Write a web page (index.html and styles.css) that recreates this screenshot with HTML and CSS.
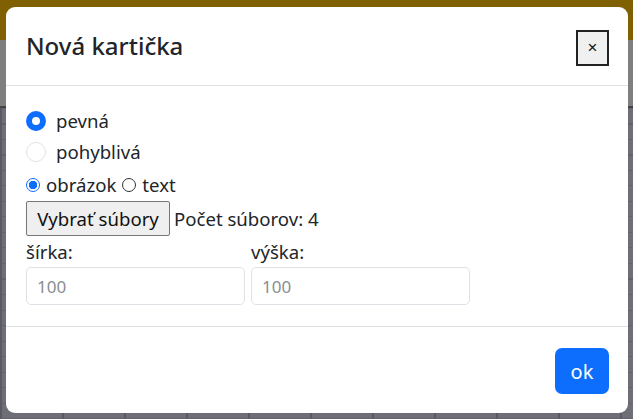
FILE: index.html
```html
<!DOCTYPE html>
<html lang="sk">
<head>
<meta charset="utf-8">
<title>Nová kartička</title>
<link rel="stylesheet" href="styles.css">
</head>
<body>
<div class="page">
  <div class="topbar"></div>
  <div class="sheet"></div>
  <div class="grid"></div>
</div>
<div class="backdrop"></div>
<div class="modal">
  <div class="modal-header">
    <h5 class="modal-title">Nová kartička</h5>
    <button class="close-btn" type="button">×</button>
  </div>
  <div class="modal-body">
    <label class="check check-1">
      <span class="bs-radio checked"></span>
      <span class="check-label">pevná</span>
    </label>
    <label class="check check-2">
      <span class="bs-radio"></span>
      <span class="check-label">pohyblivá</span>
    </label>
    <div class="native-row">
      <span class="nat-radio checked"></span>
      <span class="nat-label">obrázok</span>
      <span class="nat-radio"></span>
      <span class="nat-label">text</span>
    </div>
    <div class="file-row">
      <button class="file-btn" type="button">Vybrať súbory</button>
      <span class="file-count">Počet súborov: 4</span>
    </div>
    <div class="size-row">
      <div class="field">
        <label class="field-label">šírka:</label>
        <input class="field-input" type="text" placeholder="100">
      </div>
      <div class="field">
        <label class="field-label">výška:</label>
        <input class="field-input" type="text" placeholder="100">
      </div>
    </div>
  </div>
  <div class="modal-footer">
    <button class="ok-btn" type="button">ok</button>
  </div>
</div>
</body>
</html>
```

FILE: styles.css
```css
html, body {
  margin: 0;
  padding: 0;
  width: 633px;
  height: 419px;
  overflow: hidden;
}

body {
  font-family: "Noto Sans", "Open Sans", sans-serif;
  color: #212529;
  position: relative;
}

.page {
  display: flex;
  flex-direction: column;
  height: 419px;
}

.topbar {
  height: 40px;
  background: #ffc107;
}

.sheet {
  height: 66px;
  background: #ffffff;
  border-bottom: 2px solid #888;
}

.grid {
  flex: 1;
  background-color: #dcdcee;
  background-image:
    repeating-linear-gradient(90deg, #b4b4c4 0 2px, transparent 2px 62px),
    repeating-linear-gradient(0deg, #c4c4d4 0 1px, transparent 1px 15.5px);
}

.backdrop {
  position: fixed;
  inset: 0;
  background: rgba(0, 0, 0, 0.5);
}

.modal {
  position: fixed;
  left: 6px;
  top: 7px;
  width: 622px;
  height: 406px;
  background: #fff;
  border-radius: 9px;
  display: flex;
  flex-direction: column;
  box-sizing: border-box;
}

.modal-header {
  height: 79px;
  box-sizing: border-box;
  border-bottom: 1px solid #dee2e6;
  display: flex;
  align-items: center;
  justify-content: space-between;
  padding: 0 19px 0 20px;
}

.modal-title {
  margin: 0;
  font-size: 24px;
  font-weight: 500;
  line-height: 1.2;
}

.close-btn {
  width: 33px;
  height: 36px;
  box-sizing: border-box;
  border: 2px solid #222;
  background: #f0f0f0;
  font-family: "Liberation Sans", sans-serif;
  font-size: 17px;
  color: #111;
  padding: 0;
  margin-top: 3px;
}

.modal-body {
  height: 241px;
  box-sizing: border-box;
  border-bottom: 1px solid #dee2e6;
  padding: 20px 20px 0 20px;
  display: flex;
  flex-direction: column;
  font-size: 18.6px;
}

.check {
  display: flex;
  align-items: center;
  gap: 10px;
}

.check-1 { height: 30px; }
.check-2 { height: 32px; }

.bs-radio {
  width: 20px;
  height: 20px;
  box-sizing: border-box;
  border-radius: 50%;
  border: 1px solid #dee2e6;
  background: #fff;
}

.bs-radio.checked {
  border: 6px solid #0d6efd;
}

.check-label {
  line-height: 1;
}

.native-row {
  height: 33px;
  display: flex;
  align-items: center;
}

.nat-radio {
  width: 14px;
  height: 14px;
  box-sizing: border-box;
  border-radius: 50%;
  border: 1px solid #333;
  background: #fff;
  margin-right: 6px;
}

.nat-radio.checked {
  border: 1px solid #0d6efd;
  background: radial-gradient(circle, #0d6efd 0 4px, #fff 4.5px);
}

.nat-label {
  margin-right: 6px;
}

.file-row {
  height: 35px;
  display: flex;
  align-items: center;
  gap: 4px;
}

.file-btn {
  height: 35px;
  width: 144px;
  box-sizing: border-box;
  border: 1px solid #767676;
  border-radius: 2px;
  background: #efefef;
  font-family: inherit;
  font-size: 18.6px;
  color: #111;
  padding: 0;
}

.size-row {
  display: flex;
  gap: 6px;
}

.field {
  display: flex;
  flex-direction: column;
  width: 219px;
}

.field-label {
  height: 31px;
  display: flex;
  align-items: center;
  line-height: 1;
  padding-top: 2px;
  box-sizing: border-box;
}

.field-input {
  height: 38px;
  width: 219px;
  box-sizing: border-box;
  border: 1px solid #dee2e6;
  border-radius: 5px;
  padding: 0 10px;
  font-family: "Noto Sans", sans-serif;
  font-size: 17px;
  color: #212529;
}

.field-input::placeholder {
  color: #8a8d91;
}

.modal-footer {
  flex: 1;
  display: flex;
  justify-content: flex-end;
  align-items: flex-start;
  padding: 21px 19px 0 0;
}

.ok-btn {
  width: 54px;
  height: 46px;
  border: none;
  border-radius: 7px;
  background: #0d6efd;
  color: #fff;
  font-family: inherit;
  font-size: 20px;
  padding: 0;
}
```
